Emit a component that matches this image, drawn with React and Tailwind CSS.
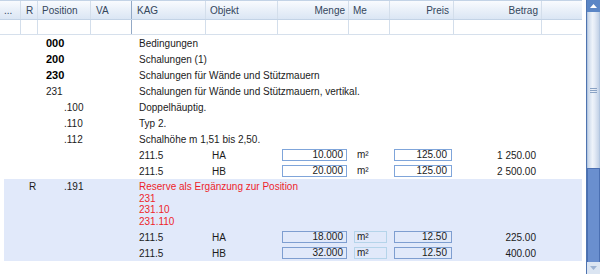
import React from 'react';

const cols = 'grid grid-cols-[20px_17px_53px_41px_74px_72px_71px_41px_64px_88px_41px]';

const headers = [
  { label: '...', align: 'text-left pl-[4px]' },
  { label: 'R', align: 'text-left pl-[5px]' },
  { label: 'Position', align: 'text-left pl-[4px]' },
  { label: 'VA', align: 'text-left pl-[5px]' },
  { label: 'KAG', align: 'text-left pl-[5px]' },
  { label: 'Objekt', align: 'text-left pl-[4px]' },
  { label: 'Menge', align: 'text-right pr-[3px]' },
  { label: 'Me', align: 'text-left pl-[4px]' },
  { label: 'Preis', align: 'text-right pr-[4px]' },
  { label: 'Betrag', align: 'text-right pr-[3px]' },
  { label: '', align: '' },
];

const textRows = [
  { pos: '000', indent: 'pl-[9px]', bold: true, text: 'Bedingungen' },
  { pos: '200', indent: 'pl-[9px]', bold: true, text: 'Schalungen (1)' },
  { pos: '230', indent: 'pl-[9px]', bold: true, text: 'Schalungen für Wände und Stützmauern' },
  { pos: '231', indent: 'pl-[9px]', bold: false, text: 'Schalungen für Wände und Stützmauern, vertikal.' },
  { pos: '.100', indent: 'pl-[27px]', bold: false, text: 'Doppelhäuptig.' },
  { pos: '.110', indent: 'pl-[27px]', bold: false, text: 'Typ 2.' },
  { pos: '.112', indent: 'pl-[27px]', bold: false, text: 'Schalhöhe m 1,51 bis 2,50.' },
];

const sepLeft = (i) => (i === 4 ? 'border-l border-l-[#93a9c6]' : i > 0 ? 'border-l border-l-[#d3deeb]' : '');

function ItemRow({ kag, obj, menge, preis, betrag, reserve }) {
  return (
    <div className={`${cols} h-4 items-center`}>
      <div className="col-span-4" />
      <div className="pl-[8px]">{kag}</div>
      <div className="pl-[7px]">{obj}</div>
      <div className="ml-[5px] mr-[1px] h-[12px] border border-[#7fa5da] pr-[3px] text-right leading-[10px] bg-white data-[r=true]:bg-transparent data-[r=true]:border-[#7e9ed0]" data-r={reserve}>
        {menge}
      </div>
      <div
        className={`ml-[6px] h-[12px] w-[33px] border pl-[2px] leading-[10px] ${reserve ? 'border-[#b5d4ea]' : 'border-transparent'}`}
      >
        m²
      </div>
      <div
        className={`ml-[5px] mr-[1px] h-[12px] border pr-[4px] text-right leading-[10px] ${reserve ? 'border-[#7e9ed0]' : 'border-[#7fa5da] bg-white'}`}
      >
        {preis}
      </div>
      <div className="pr-[5px] text-right">{betrag}</div>
      <div />
    </div>
  );
}

function Scrollbar() {
  return (
    <div className="flex h-[274px] w-[14px] flex-col border-l border-[#4f74b0] bg-[#d6e1f0]">
      <div className="flex h-[12px] items-center justify-center bg-[#5b86c6]">
        <svg width="7" height="4" viewBox="0 0 7 4">
          <path d="M0 4 L3.5 0 L7 4 Z" fill="#ffffff" />
        </svg>
      </div>
      <div className="flex h-[156px] items-center justify-center border-x border-[#b3c6e0] bg-[linear-gradient(to_right,#c9d7ea,#eef3fa_40%,#e4ebf6_60%,#c3d2e7)]">
        <div className="flex flex-col gap-[1px]">
          <div className="h-[1px] w-[7px] bg-[#8aa2c4]" />
          <div className="h-[1px] w-[7px] bg-[#8aa2c4]" />
          <div className="h-[1px] w-[7px] bg-[#8aa2c4]" />
        </div>
      </div>
      <div className="h-[94px] border-x border-t border-[#4a6fb2] bg-[#6a8fcf]" />
      <div className="flex flex-1 items-center justify-center bg-[#dbe5f2]">
        <svg width="7" height="4" viewBox="0 0 7 4">
          <path d="M0 0 L3.5 4 L7 0 Z" fill="#9db3d3" />
        </svg>
      </div>
    </div>
  );
}

export default function App() {
  return (
    <div className="flex h-[274px] w-[600px] overflow-hidden bg-white font-['Liberation_Sans',Arial,sans-serif] text-[10px] text-[#1b1b1b]">
      <div className="w-[582px]">
        {/* header */}
        <div className={`${cols} h-[20px] border-t border-b border-[#c3d3e6] bg-[linear-gradient(to_bottom,#f9fbfe,#e9f0f9_50%,#dbe6f4)] text-[#34465c]`}>
          {headers.map((h, i) => (
            <div key={i} className={`flex items-center ${sepLeft(i)} ${h.align} ${h.align.includes('right') ? 'justify-end' : ''}`}>
              {h.label}
            </div>
          ))}
        </div>
        {/* filter row */}
        <div className={`${cols} h-[15px] border-b border-[#d6e0ec]`}>
          {headers.map((h, i) => (
            <div key={i} className={sepLeft(i)} />
          ))}
        </div>

        {textRows.map((r, i) => (
          <div key={i} className={`${cols} h-4 items-center`}>
            <div className="col-span-2" />
            <div className={`${r.indent} ${r.bold ? 'font-bold text-[11px] text-black' : ''}`}>{r.pos}</div>
            <div />
            <div className="col-span-7 whitespace-nowrap pl-[8px]">{r.text}</div>
          </div>
        ))}

        <ItemRow kag="211.5" obj="HA" menge="10.000" preis="125.00" betrag="1 250.00" />
        <ItemRow kag="211.5" obj="HB" menge="20.000" preis="125.00" betrag="2 500.00" />

        {/* reserve block */}
        <div className="ml-[4px] w-[578px] bg-[#e1e9fa]">
          <div className={`${cols} -ml-[4px] w-[582px] pt-[2px] pb-[2px]`}>
            <div />
            <div className="pl-[9px] leading-[12px]">R</div>
            <div className="pl-[27px] leading-[12px]">.191</div>
            <div />
            <div className="col-span-7 whitespace-nowrap pl-[8px] leading-[11.5px] text-[#ee1f2b]">
              <div>Reserve als Ergänzung zur Position</div>
              <div>231</div>
              <div>231.10</div>
              <div>231.110</div>
            </div>
          </div>
          <div className="-ml-[4px] w-[582px]">
            <ItemRow kag="211.5" obj="HA" menge="18.000" preis="12.50" betrag="225.00" reserve />
            <ItemRow kag="211.5" obj="HB" menge="32.000" preis="12.50" betrag="400.00" reserve />
          </div>
        </div>
      </div>
      <div className="w-[4px]" />
      <Scrollbar />
    </div>
  );
}
